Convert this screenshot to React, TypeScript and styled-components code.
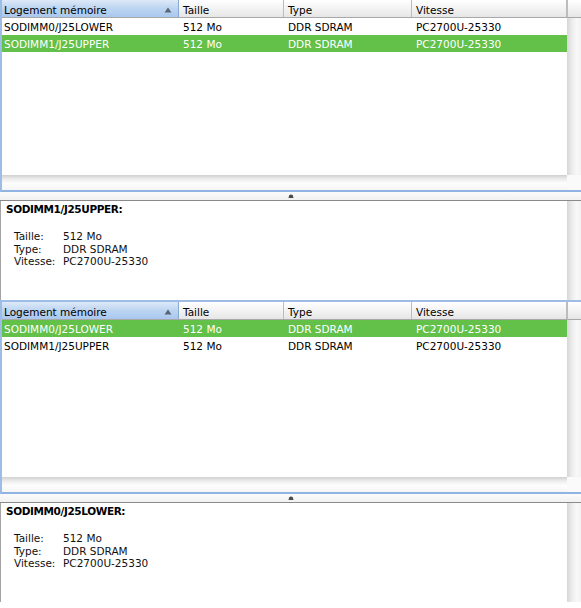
import React from 'react';
import styled, { createGlobalStyle, css } from 'styled-components';

const GlobalStyle = createGlobalStyle`
  html, body {
    margin: 0;
    padding: 0;
    background: #ffffff;
    overflow: hidden;
  }
  body {
    font-family: 'DejaVu Sans', 'Liberation Sans', sans-serif;
    font-size: 10.5px;
    color: #000;
  }
`;

const columns = [
  { key: 'name', label: 'Logement mémoire', width: 177 },
  { key: 'size', label: 'Taille', width: 105 },
  { key: 'type', label: 'Type', width: 128 },
  { key: 'speed', label: 'Vitesse', width: 155 },
] as const;

type Slot = { name: string; size: string; type: string; speed: string };

const slots: Slot[] = [
  { name: 'SODIMM0/J25LOWER', size: '512 Mo', type: 'DDR SDRAM', speed: 'PC2700U-25330' },
  { name: 'SODIMM1/J25UPPER', size: '512 Mo', type: 'DDR SDRAM', speed: 'PC2700U-25330' },
];

const Page = styled.div`
  margin-top: -2px;
  width: 581px;
`;

const Panel = styled.div`
  height: 302px;
  display: flex;
  flex-direction: column;
`;

const ScrollView = styled.div`
  display: flex;
  height: 190px;
  border-top: 2px solid #9dbde6;
  border-left: 2px solid #9dbde6;
  border-bottom: 2px solid #8fb3e2;
`;

const TableArea = styled.div`
  width: 565px;
  display: flex;
  flex-direction: column;
`;

const HeaderRow = styled.div`
  display: flex;
  height: 17px;
  border-bottom: 1px solid #a8a8a8;
  background: linear-gradient(#ffffff, #f3f3f3 50%, #e6e6e6);
`;

const HeaderCell = styled.div<{ $w: number; $first?: boolean; $active?: boolean }>`
  width: ${(p) => p.$w}px;
  box-sizing: border-box;
  display: flex;
  align-items: center;
  justify-content: space-between;
  padding: 2px 6px 0 ${(p) => (p.$first ? 2 : 4)}px;
  border-right: 1px solid #bcbcbc;
  white-space: nowrap;
  ${(p) =>
    p.$active &&
    css`
      background: linear-gradient(#dde9f8, #bcd4f1 50%, #a9c8ee);
      border-right-color: #8aa9d2;
    `}
`;

const Row = styled.div<{ $selected?: boolean }>`
  display: flex;
  height: 17px;
  box-sizing: border-box;
  padding-top: 1px;
  align-items: center;
  background: ${(p) => (p.$selected ? '#63c049' : 'transparent')};
  color: ${(p) => (p.$selected ? '#ffffff' : '#000000')};
`;

const Cell = styled.div<{ $w: number; $first?: boolean }>`
  width: ${(p) => p.$w}px;
  box-sizing: border-box;
  padding-left: ${(p) => (p.$first ? 2 : 4)}px;
  white-space: nowrap;
`;

const Filler = styled.div`
  flex: 1;
`;

const HBand = styled.div`
  height: 15px;
  background: linear-gradient(#d0d0d0, #ebebeb 25%, #fdfdfd 55%, #f5f5f5);
`;

const VTrack = styled.div`
  width: 14px;
  display: flex;
  flex-direction: column;
`;

const HeaderCorner = styled.div`
  height: 17px;
  border-bottom: 1px solid #a8a8a8;
  border-left: 1px solid #bcbcbc;
  background: linear-gradient(#ffffff, #f3f3f3 50%, #e6e6e6);
`;

const Track = styled.div`
  flex: 1;
  background: linear-gradient(to right, #d6d6d6, #ececec 35%, #f8f8f8 70%, #f2f2f2);
`;

const TrackCorner = styled.div`
  height: 15px;
  background: #fafafa;
`;

const Splitter = styled.div`
  height: 8px;
  border-bottom: 1px solid #8a8a8a;
  background: linear-gradient(#fbfbfb, #f1f1f1);
  display: flex;
  justify-content: center;
  align-items: center;
`;

const Details = styled.div`
  flex: 1;
  display: flex;
  border-left: 1px solid #a4a4a4;
`;

const DetailsBody = styled.div`
  flex: 1;
  padding: 2px 0 0 5px;
`;

const DetailsTitle = styled.div`
  font-weight: bold;
  letter-spacing: -0.4px;
  line-height: 13px;
  margin-bottom: 14px;
`;

const InfoGrid = styled.div`
  display: grid;
  grid-template-columns: 49px auto;
  padding-left: 8px;
  line-height: 12.5px;
  color: #111;
`;

const SortArrow = () => (
  <svg width="8" height="6" viewBox="0 0 8 6">
    <path d="M4 0.5 L7.5 5.5 L0.5 5.5 Z" fill="#5a6572" />
  </svg>
);

const Grip = () => (
  <svg width="6" height="4" viewBox="0 0 6 4">
    <path d="M0.5 4 L1.2 1.2 Q3 0 4.8 1.2 L5.5 4 Z" fill="#4a4a4a" />
  </svg>
);

const MemoryPanel: React.FC<{ selected: number }> = ({ selected }) => {
  const current = slots[selected];
  return (
    <Panel>
      <ScrollView>
        <TableArea>
          <HeaderRow>
            {columns.map((c, i) => (
              <HeaderCell key={c.key} $w={c.width} $first={i === 0} $active={i === 0}>
                <span>{c.label}</span>
                {i === 0 && <SortArrow />}
              </HeaderCell>
            ))}
          </HeaderRow>
          {slots.map((s, r) => (
            <Row key={s.name} $selected={r === selected}>
              {columns.map((c, i) => (
                <Cell key={c.key} $w={c.width} $first={i === 0}>
                  {s[c.key]}
                </Cell>
              ))}
            </Row>
          ))}
          <Filler />
          <HBand />
        </TableArea>
        <VTrack>
          <HeaderCorner />
          <Track />
          <TrackCorner />
        </VTrack>
      </ScrollView>
      <Splitter>
        <Grip />
      </Splitter>
      <Details>
        <DetailsBody>
          <DetailsTitle>{current.name}:</DetailsTitle>
          <InfoGrid>
            <span>Taille:</span>
            <span>{current.size}</span>
            <span>Type:</span>
            <span>{current.type}</span>
            <span>Vitesse:</span>
            <span>{current.speed}</span>
          </InfoGrid>
        </DetailsBody>
        <VTrack>
          <Track />
        </VTrack>
      </Details>
    </Panel>
  );
};

const App: React.FC = () => {
  return (
    <Page>
      <GlobalStyle />
      <MemoryPanel selected={1} />
      <MemoryPanel selected={0} />
    </Page>
  );
};

export default App;
